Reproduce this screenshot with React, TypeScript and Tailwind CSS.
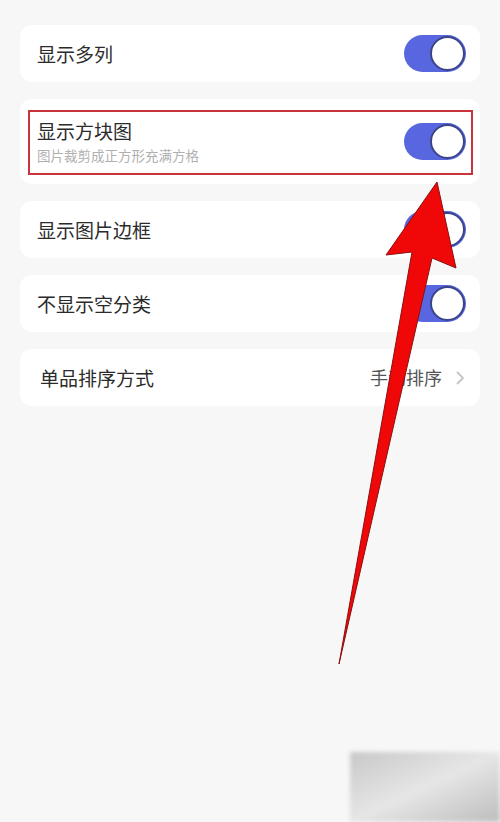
import React from "react";

const font = { fontFamily: '"Noto Sans CJK SC", "Noto Sans", sans-serif' };

function Toggle() {
  return (
    <div className="relative w-[62px] h-[37px] rounded-full bg-[#5867e0]">
      <div className="absolute right-[1px] top-[1px] w-[35px] h-[35px] rounded-full bg-white border-2 border-[#3b4488]" />
    </div>
  );
}

function Row({ title, sub, children, tall, indent }: { title: string; sub?: string; children: React.ReactNode; tall?: boolean; indent?: boolean }) {
  return (
    <div className={`relative bg-white rounded-xl flex items-center justify-between pr-[14px] ${indent ? "pl-[20px]" : "pl-[17px]"} ${tall ? "h-[85px]" : "h-[57px]"}`}>
      <div className="flex flex-col">
        <span className="text-[19px] leading-[24px] text-[#2b2b2b]">{title}</span>
        {sub && <span className="text-[13.5px] leading-[18px] text-[#b0b0b0] mt-[3px]">{sub}</span>}
      </div>
      {children}
      {tall && <div className="absolute left-[8px] right-[7px] top-[11px] bottom-[9px] border-2 border-[#c8343a] pointer-events-none" />}
    </div>
  );
}

export default function App() {
  return (
    <div className="relative w-[500px] h-[822px] bg-[#f7f7f7] overflow-hidden" style={font}>
      <div className="flex flex-col gap-[17px] px-[20px] pt-[25px]">
        <Row title="显示多列">
          <Toggle />
        </Row>
        <Row title="显示方块图" sub="图片裁剪成正方形充满方格" tall>
          <Toggle />
        </Row>
        <Row title="显示图片边框">
          <Toggle />
        </Row>
        <Row title="不显示空分类">
          <Toggle />
        </Row>
        <Row title="单品排序方式" indent>
          <div className="flex items-center gap-[12px]">
            <span className="text-[18px] text-[#555]">手动排序</span>
            <svg width="12" height="18" viewBox="0 0 12 18" fill="none" stroke="#c4c4c4" strokeWidth="1.8">
              <path d="M3 3l6 6-6 6" />
            </svg>
          </div>
        </Row>
      </div>

      <svg className="absolute inset-0 pointer-events-none" width="500" height="822" viewBox="0 0 500 822">
        <polygon
          points="437,182 456,268 432,258 339,664 412,252 386,255"
          fill="#f00808"
          stroke="#8a1010"
          strokeWidth="1"
          strokeLinejoin="round"
        />
      </svg>

      <div className="absolute left-[350px] top-[752px] w-[150px] h-[70px] bg-gradient-to-br from-[#c8c8c8] via-[#e6e6e6] to-[#bdbdbd] blur-[2px]" />
    </div>
  );
}
